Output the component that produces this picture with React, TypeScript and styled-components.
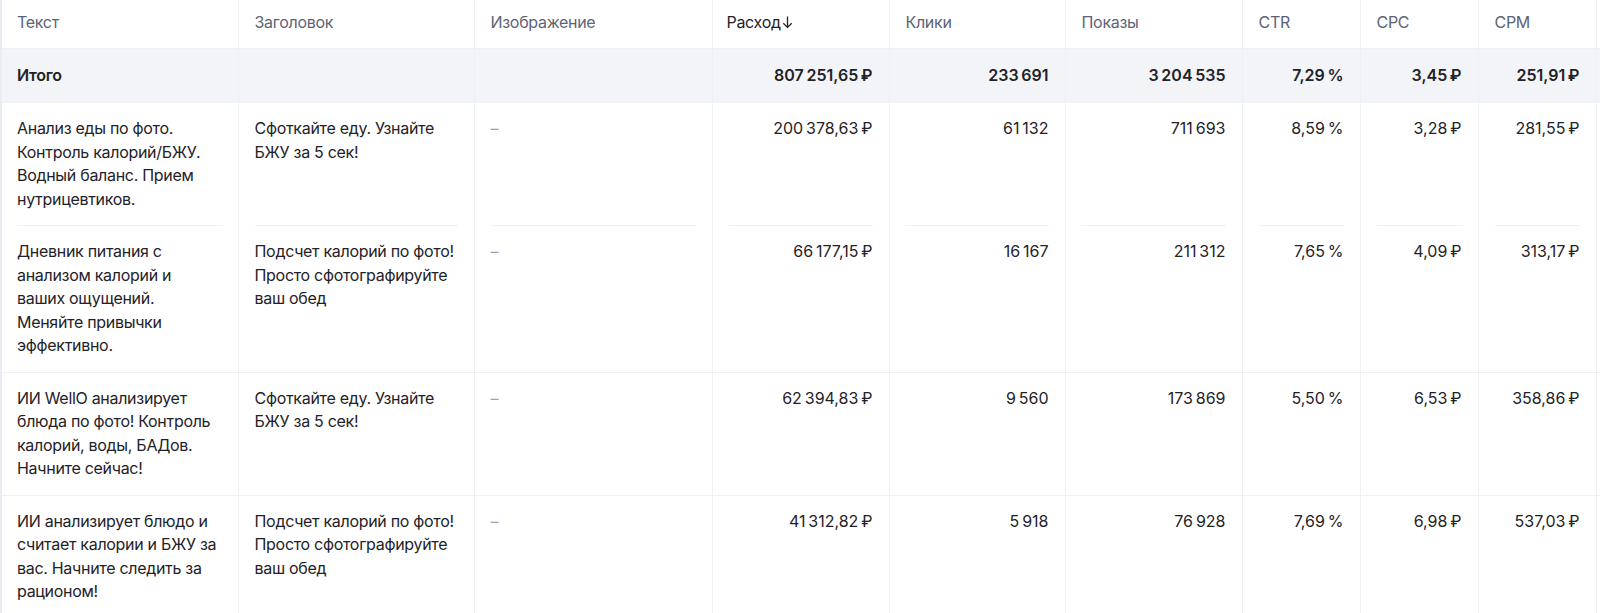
import React from "react";
import styled, { createGlobalStyle } from "styled-components";

const GlobalStyle = createGlobalStyle`
  html, body { margin: 0; padding: 0; background: #ffffff; }
  body { font-family: Inter, "Noto Sans", "Liberation Sans", sans-serif; }
`;

const Page = styled.div`
  display: flex;
  width: 1600px;
  height: 613px;
  overflow: hidden;
  border-left: 2px solid #e9ecf2;
  box-sizing: border-box;
`;

const Table = styled.table`
  border-collapse: collapse;
  table-layout: fixed;
  width: 1694px;
  flex: none;
  font-size: 16px;
  letter-spacing: -0.3px;
  color: #1f2228;
`;

const HeadCell = styled.th<{ $active?: boolean; $first?: boolean }>`
  text-align: left;
  font-weight: 400;
  line-height: 24px;
  padding: 10px 16px 14px ${(p) => (p.$first ? "15px" : "16px")};
  color: ${(p) => (p.$active ? "#1f2228" : "#5d6376")};
  border-right: 1px solid #eef0f4;
  border-bottom: 1px solid #eef0f4;
  white-space: nowrap;
  overflow: hidden;
  vertical-align: top;
`;

const SortLabel = styled.span`
  display: inline-flex;
  align-items: center;
  gap: 1px;
  margin-left: -2px;
`;

const TotalRow = styled.tr`
  background: #f2f4f7;
`;

const TotalCell = styled.td<{ $align?: "left" | "right"; $first?: boolean }>`
  text-align: ${(p) => p.$align ?? "left"};
  font-weight: 600;
  line-height: 24px;
  padding: 14px 16px 15px ${(p) => (p.$first ? "15px" : "16px")};
  border-right: 1px solid #eef0f4;
  border-bottom: 1px solid #eef0f4;
  white-space: nowrap;
  vertical-align: top;
`;

const Cell = styled.td<{ $align?: "left" | "right"; $inset?: boolean }>`
  position: relative;
  text-align: ${(p) => p.$align ?? "left"};
  line-height: 23.6px;
  padding: 14px 16px 13.6px 16px;
  border-right: 1px solid #eef0f4;
  border-bottom: 1px solid ${(p) => (p.$inset ? "transparent" : "#eef0f4")};
  vertical-align: top;
  white-space: ${(p) => (p.$align === "right" ? "nowrap" : "normal")};

  &::after {
    content: "";
    display: ${(p) => (p.$inset ? "block" : "none")};
    position: absolute;
    left: 16px;
    right: 16px;
    bottom: -1px;
    height: 1px;
    background: #eef0f4;
  }
`;

const TextCell = styled(Cell)<{ $first?: boolean }>`
  padding-left: ${(p) => (p.$first ? "15px" : "16px")};
  padding-right: ${(p) => (p.$first ? "18px" : "12px")};
`;

const Dash = styled.span`
  color: #9ea3b1;
`;

const ArrowDown = () => (
  <svg width="11" height="14" viewBox="0 0 11 14" fill="none">
    <path d="M5.5 1.5V12.2M1.3 8.2L5.5 12.4L9.7 8.2" stroke="#1f2228" strokeWidth="1.3" />
  </svg>
);

const n = "\u202F";

type Row = {
  text: string;
  title: string;
  spend: string;
  clicks: string;
  shows: string;
  ctr: string;
  cpc: string;
  cpm: string;
};

const rows: Row[] = [
  {
    text: "Анализ еды по фото. Контроль калорий/БЖУ. Водный баланс. Прием нутрицевтиков.",
    title: "Сфоткайте еду. Узнайте БЖУ за 5 сек!",
    spend: `200${n}378,63${n}₽`,
    clicks: `61${n}132`,
    shows: `711${n}693`,
    ctr: `8,59${n}%`,
    cpc: `3,28${n}₽`,
    cpm: `281,55${n}₽`,
  },
  {
    text: "Дневник питания с анализом калорий и ваших ощущений. Меняйте привычки эффективно.",
    title: "Подсчет калорий по фото! Просто сфотографируйте ваш обед",
    spend: `66${n}177,15${n}₽`,
    clicks: `16${n}167`,
    shows: `211${n}312`,
    ctr: `7,65${n}%`,
    cpc: `4,09${n}₽`,
    cpm: `313,17${n}₽`,
  },
  {
    text: "ИИ WellO анализирует блюда по фото! Контроль калорий, воды, БАДов. Начните сейчас!",
    title: "Сфоткайте еду. Узнайте БЖУ за 5 сек!",
    spend: `62${n}394,83${n}₽`,
    clicks: `9${n}560`,
    shows: `173${n}869`,
    ctr: `5,50${n}%`,
    cpc: `6,53${n}₽`,
    cpm: `358,86${n}₽`,
  },
  {
    text: "ИИ анализирует блюдо и считает калории и БЖУ за вас. Начните следить за рационом!",
    title: "Подсчет калорий по фото! Просто сфотографируйте ваш обед",
    spend: `41${n}312,82${n}₽`,
    clicks: `5${n}918`,
    shows: `76${n}928`,
    ctr: `7,69${n}%`,
    cpc: `6,98${n}₽`,
    cpm: `537,03${n}₽`,
  },
];

const widths = [236, 236, 238, 177, 176, 177, 118, 118, 118, 100];

export default function App() {
  return (
    <>
      <GlobalStyle />
      <Page>
        <Table>
          <colgroup>
            {widths.map((w, i) => (
              <col key={i} style={{ width: w }} />
            ))}
          </colgroup>
          <thead>
            <tr>
              <HeadCell $first>Текст</HeadCell>
              <HeadCell>Заголовок</HeadCell>
              <HeadCell>Изображение</HeadCell>
              <HeadCell $active>
                <SortLabel>
                  Расход
                  <ArrowDown />
                </SortLabel>
              </HeadCell>
              <HeadCell>Клики</HeadCell>
              <HeadCell>Показы</HeadCell>
              <HeadCell>CTR</HeadCell>
              <HeadCell>CPC</HeadCell>
              <HeadCell>CPM</HeadCell>
              <HeadCell />
            </tr>
          </thead>
          <tbody>
            <TotalRow>
              <TotalCell $first>Итого</TotalCell>
              <TotalCell />
              <TotalCell />
              <TotalCell $align="right">{`807${n}251,65${n}₽`}</TotalCell>
              <TotalCell $align="right">{`233${n}691`}</TotalCell>
              <TotalCell $align="right">{`3${n}204${n}535`}</TotalCell>
              <TotalCell $align="right">{`7,29${n}%`}</TotalCell>
              <TotalCell $align="right">{`3,45${n}₽`}</TotalCell>
              <TotalCell $align="right">{`251,91${n}₽`}</TotalCell>
              <TotalCell />
            </TotalRow>
            {rows.map((r, i) => {
              const inset = i === 0;
              return (
                <tr key={i}>
                  <TextCell $first $inset={inset}>{r.text}</TextCell>
                  <TextCell $inset={inset}>{r.title}</TextCell>
                  <Cell $inset={inset}>
                    <Dash>–</Dash>
                  </Cell>
                  <Cell $inset={inset} $align="right">{r.spend}</Cell>
                  <Cell $inset={inset} $align="right">{r.clicks}</Cell>
                  <Cell $inset={inset} $align="right">{r.shows}</Cell>
                  <Cell $inset={inset} $align="right">{r.ctr}</Cell>
                  <Cell $inset={inset} $align="right">{r.cpc}</Cell>
                  <Cell $inset={inset} $align="right">{r.cpm}</Cell>
                  <Cell $inset={inset} />
                </tr>
              );
            })}
          </tbody>
        </Table>
      </Page>
    </>
  );
}
